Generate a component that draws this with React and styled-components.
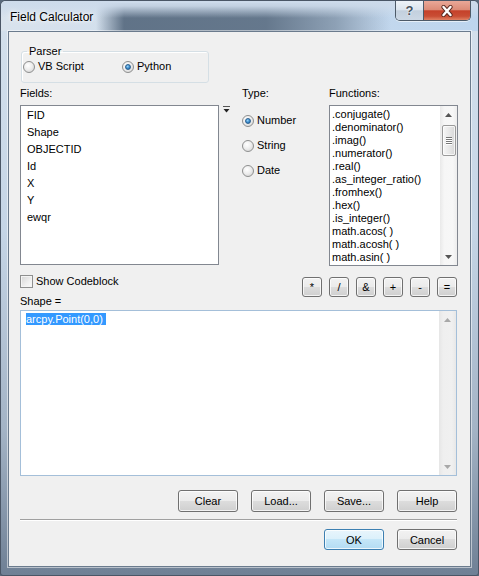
import React from 'react';
import styled, { createGlobalStyle } from 'styled-components';

const GlobalStyle = createGlobalStyle`
  html, body {
    margin: 0;
    padding: 0;
    background: #5a6a7c;
  }
  body {
    font-family: "Liberation Sans", Arial, sans-serif;
    font-size: 11px;
    color: #000;
  }
  * {
    box-sizing: border-box;
  }
`;

// Window frame
const Window = styled.div`
  width: 479px;
  height: 576px;
  display: flex;
  flex-direction: column;
  border: 1px solid #4a5666;
  border-radius: 6px 6px 3px 3px;
  overflow: hidden;
  background: linear-gradient(to bottom, #d5e1ed 0%, #c5d5e6 40%, #a3b3c5 75%, #6f8095 100%);
`;

const TitleBar = styled.div`
  height: 30px;
  flex-shrink: 0;
  display: flex;
  align-items: flex-start;
  justify-content: space-between;
  background:
    linear-gradient(to bottom, rgba(205, 219, 235, 1) 0px, rgba(205, 219, 235, 0.9) 5px, rgba(205, 219, 235, 0) 17px),
    linear-gradient(to right, rgba(90, 109, 130, 0) 0px, rgba(90, 109, 130, 0.95) 28px, rgba(90, 109, 130, 0.9) 170px, rgba(96, 115, 136, 0.55) 240px, rgba(96, 115, 136, 0) 295px) 95px 2px / 300px 28px no-repeat,
    linear-gradient(to right, #d9e3ed 0%, #cddcec 40%, #bdd5ee 100%);
`;

const Title = styled.div`
  padding: 9px 0 0 9px;
  font-size: 12px;
  line-height: 14px;
  text-shadow: 0 0 6px #fff, 0 0 3px #fff;
`;

const CaptionGroup = styled.div`
  display: flex;
  margin-right: 7px;
  border: 1px solid #4d5a68;
  border-top: none;
  border-radius: 0 0 5px 5px;
  overflow: hidden;
  box-shadow: 0 1px 0 rgba(255, 255, 255, 0.6);
`;

const CaptionButton = styled.div`
  width: ${(p) => p.$w}px;
  height: 19px;
  display: flex;
  align-items: center;
  justify-content: center;
  background: ${(p) =>
    p.$close
      ? 'linear-gradient(#e9a898 0%, #dc8c78 45%, #c5412a 52%, #c94d34 80%, #e08163 100%)'
      : 'linear-gradient(#eef3f8 0%, #dce5ee 45%, #c3d0de 52%, #ccd8e5 100%)'};
  & + & {
    border-left: 1px solid #4d5a68;
  }
`;

const HelpGlyph = styled.span`
  font-size: 13px;
  font-weight: bold;
  color: #46525e;
  text-shadow: 0 0 2px #fff, 0 0 1px #fff;
  line-height: 13px;
`;

const Client = styled.div`
  flex: 1;
  margin: 0 7px;
  display: flex;
  flex-direction: column;
  background: #f0f0f0;
  border: 1px solid #6b7b8d;
  box-shadow: 0 0 0 1px rgba(255, 255, 255, 0.5);
  padding: 13px 13px 0 11px;
`;

const BottomFrame = styled.div`
  height: 8px;
  flex-shrink: 0;
`;

// Parser group
const GroupBox = styled.fieldset`
  margin: 0 0 0 1px;
  width: 188px;
  padding: 2px 1px 9px 1px;
  border: 1px solid #d5dfe5;
  border-radius: 3px;
  box-shadow: inset 1px 1px 0 #fff;
  display: flex;
`;

const Legend = styled.legend`
  padding: 0 2px;
  margin-left: 4px;
  line-height: 13px;
`;

const RadioOption = styled.label`
  display: flex;
  align-items: center;
  gap: 3px;
  width: ${(p) => (p.$width ? `${p.$width}px` : 'auto')};
  height: 13px;
  line-height: 13px;
  white-space: nowrap;
`;

const RadioDot = styled.span`
  position: relative;
  width: 12px;
  height: 12px;
  flex-shrink: 0;
  border-radius: 50%;
  border: 1px solid #8e8f8f;
  background: radial-gradient(circle at 40% 35%, #ffffff 0%, #eeeeee 45%, #cdcdcd 100%);

  &::after {
    content: '';
    display: ${(p) => (p.$checked ? 'block' : 'none')};
    position: absolute;
    inset: 2px;
    border-radius: 50%;
    border: 1px solid #2a5f8f;
    background: radial-gradient(circle at 40% 35%, #9ad4f7 0%, #3d8fd0 50%, #1c5a94 100%);
  }
`;

const Radio = ({ checked, width, children }) => (
  <RadioOption $width={width}>
    <RadioDot $checked={checked} />
    {children}
  </RadioOption>
);

// Fields / Type / Functions
const FieldsGrid = styled.div`
  display: grid;
  grid-template-columns: 199px 23px 87px 129px;
  grid-template-rows: 13px auto;
  row-gap: 5px;
  margin-top: 4px;
`;

const Label = styled.div`
  line-height: 13px;
  white-space: nowrap;
`;

const ListBox = styled.div`
  height: ${(p) => p.$h}px;
  border: 1px solid #828790;
  background: #fff;
  display: flex;
  overflow: hidden;
`;

const FieldItems = styled.div`
  flex: 1;
  padding: 1px 6px;
  line-height: 17px;
`;

const FuncItems = styled.div`
  flex: 1;
  padding: 2px 0 0 2px;
  line-height: 13px;
  white-space: nowrap;
  overflow: hidden;
`;

const SortIcon = styled.svg`
  margin: 1px 0 0 4px;
`;

const TypeColumn = styled.div`
  display: flex;
  flex-direction: column;
  gap: 12px;
  padding-top: 9px;
`;

const VScroll = styled.div`
  width: 17px;
  flex-shrink: 0;
  display: flex;
  flex-direction: column;
  background: ${(p) =>
    p.$disabled
      ? 'linear-gradient(to right, #e6e6e6, #efefef 25%, #f0f0f0 75%, #e8e8e8)'
      : 'linear-gradient(to right, #e9e9e9, #f6f6f6 25%, #f7f7f7 75%, #ededed)'};
`;

const ScrollArrow = styled.div`
  height: 17px;
  flex-shrink: 0;
  display: flex;
  align-items: center;
  justify-content: center;
`;

const ScrollTrack = styled.div`
  flex: 1;
`;

const Thumb = styled.div`
  height: 31px;
  margin: 2px 1px 0 2px;
  border: 1px solid #9a9a9a;
  border-radius: 2px;
  background: linear-gradient(to right, #f6f6f6, #e8e8e8 50%, #d8d8d8);
  box-shadow: inset 0 0 0 1px rgba(255, 255, 255, 0.7);
  display: flex;
  flex-direction: column;
  align-items: center;
  justify-content: center;
  gap: 1px;
`;

const Grip = styled.span`
  width: 6px;
  height: 1px;
  background: #777;
  box-shadow: 0 1px 0 #fff;
`;

const Arrow = ({ up, color }) => (
  <svg width="7" height="4" viewBox="0 0 7 4">
    <path d={up ? 'M0 4 L3.5 0 L7 4 Z' : 'M0 0 L3.5 4 L7 0 Z'} fill={color} />
  </svg>
);

// Codeblock / operators
const MidRow = styled.div`
  display: flex;
  justify-content: space-between;
  align-items: flex-start;
  margin-top: 9px;
`;

const LeftStack = styled.div`
  display: flex;
  flex-direction: column;
`;

const CheckOption = styled.label`
  display: flex;
  align-items: center;
  gap: 3px;
  height: 13px;
  line-height: 13px;
`;

const CheckBox = styled.span`
  width: 13px;
  height: 13px;
  border: 1px solid #8e8f8f;
  background: linear-gradient(135deg, #d6d6d6 0%, #efefef 60%, #fbfbfb 100%);
  box-shadow: inset 0 0 0 1px #f4f4f4;
`;

const ShapeLabel = styled(Label)`
  margin-top: 7px;
`;

const OpRow = styled.div`
  display: flex;
  gap: 7px;
  margin-top: 2px;
`;

const Button = styled.button`
  width: ${(p) => p.$w || 60}px;
  height: ${(p) => p.$h || 22}px;
  padding: 0;
  font-family: "Liberation Sans", Arial, sans-serif;
  font-size: 11px;
  color: #000;
  border: 1px solid ${(p) => (p.$default ? '#3c7fb1' : '#707070')};
  border-radius: 3px;
  background: ${(p) =>
    p.$default
      ? 'linear-gradient(#e8f5fc 0%, #dbf0fb 49%, #c4e6f8 50%, #b3dcf3 100%)'
      : 'linear-gradient(#f2f2f2 0%, #ebebeb 49%, #dddddd 50%, #cfcfcf 100%)'};
  box-shadow: inset 0 0 0 1px rgba(255, 255, 255, 0.75);
`;

// Expression box
const Expression = styled.div`
  height: 166px;
  margin-top: 2px;
  display: flex;
  background: #fff;
  border: 1px solid #a4bfd9;
`;

const ExprText = styled.div`
  flex: 1;
  padding: 2px 5px;
  line-height: 13px;
`;

const Selected = styled.span`
  background: #3399ff;
  color: #fff;
  white-space: pre;
`;

const ButtonRow = styled.div`
  display: flex;
  justify-content: flex-end;
  gap: 13px;
  margin-top: ${(p) => p.$mt}px;
`;

const Separator = styled.div`
  margin-top: 7px;
  border-top: 1px solid #a0a0a0;
  border-bottom: 1px solid #ffffff;
`;

const fields = ['FID', 'Shape', 'OBJECTID', 'Id', 'X', 'Y', 'ewqr'];

const functions = [
  '.conjugate()',
  '.denominator()',
  '.imag()',
  '.numerator()',
  '.real()',
  '.as_integer_ratio()',
  '.fromhex()',
  '.hex()',
  '.is_integer()',
  'math.acos( )',
  'math.acosh( )',
  'math.asin( )',
  'math.asinh( )',
];

const operators = ['*', '/', '&', '+', '-', '='];

const App = () => (
  <>
    <GlobalStyle />
    <Window>
      <TitleBar>
        <Title>Field Calculator</Title>
        <CaptionGroup>
          <CaptionButton $w={27}>
            <HelpGlyph>?</HelpGlyph>
          </CaptionButton>
          <CaptionButton $w={47} $close>
            <svg width="14" height="12" viewBox="0 0 14 12">
              <path d="M3.5 2 L10.5 10 M10.5 2 L3.5 10" stroke="#5b2b22" strokeWidth="4.2" strokeLinecap="round" />
              <path d="M3.5 2 L10.5 10 M10.5 2 L3.5 10" stroke="#fff" strokeWidth="2.4" strokeLinecap="round" />
            </svg>
          </CaptionButton>
        </CaptionGroup>
      </TitleBar>

      <Client>
        <GroupBox>
          <Legend>Parser</Legend>
          <Radio width={99}>VB Script</Radio>
          <Radio checked>Python</Radio>
        </GroupBox>

        <FieldsGrid>
          <Label>Fields:</Label>
          <span />
          <Label>Type:</Label>
          <Label>Functions:</Label>

          <ListBox $h={160}>
            <FieldItems>
              {fields.map((f) => (
                <div key={f}>{f}</div>
              ))}
            </FieldItems>
          </ListBox>
          <SortIcon width="7" height="7" viewBox="0 0 7 7">
            <rect x="0" y="0" width="7" height="1" fill="#555" />
            <path d="M0.5 3 L6.5 3 L3.5 6.5 Z" fill="#222" />
          </SortIcon>
          <TypeColumn>
            <Radio checked>Number</Radio>
            <Radio>String</Radio>
            <Radio>Date</Radio>
          </TypeColumn>
          <ListBox $h={161}>
            <FuncItems>
              {functions.map((f) => (
                <div key={f}>{f}</div>
              ))}
            </FuncItems>
            <VScroll>
              <ScrollArrow>
                <Arrow up color="#555" />
              </ScrollArrow>
              <ScrollTrack>
                <Thumb>
                  <Grip />
                  <Grip />
                  <Grip />
                  <Grip />
                </Thumb>
              </ScrollTrack>
              <ScrollArrow>
                <Arrow color="#555" />
              </ScrollArrow>
            </VScroll>
          </ListBox>
        </FieldsGrid>

        <MidRow>
          <LeftStack>
            <CheckOption>
              <CheckBox />
              Show Codeblock
            </CheckOption>
            <ShapeLabel>Shape =</ShapeLabel>
          </LeftStack>
          <OpRow>
            {operators.map((op) => (
              <Button key={op} $w={20} $h={20}>
                {op}
              </Button>
            ))}
          </OpRow>
        </MidRow>

        <Expression>
          <ExprText>
            <Selected>arcpy.Point(0,0) </Selected>
          </ExprText>
          <VScroll $disabled>
            <ScrollArrow>
              <Arrow up color="#a8a8a8" />
            </ScrollArrow>
            <ScrollTrack />
            <ScrollArrow>
              <Arrow color="#a8a8a8" />
            </ScrollArrow>
          </VScroll>
        </Expression>

        <ButtonRow $mt={14}>
          <Button>Clear</Button>
          <Button>Load...</Button>
          <Button>Save...</Button>
          <Button>Help</Button>
        </ButtonRow>

        <Separator />

        <ButtonRow $mt={8}>
          <Button $h={21} $default>
            OK
          </Button>
          <Button $h={21}>Cancel</Button>
        </ButtonRow>
      </Client>
      <BottomFrame />
    </Window>
  </>
);

export default App;
